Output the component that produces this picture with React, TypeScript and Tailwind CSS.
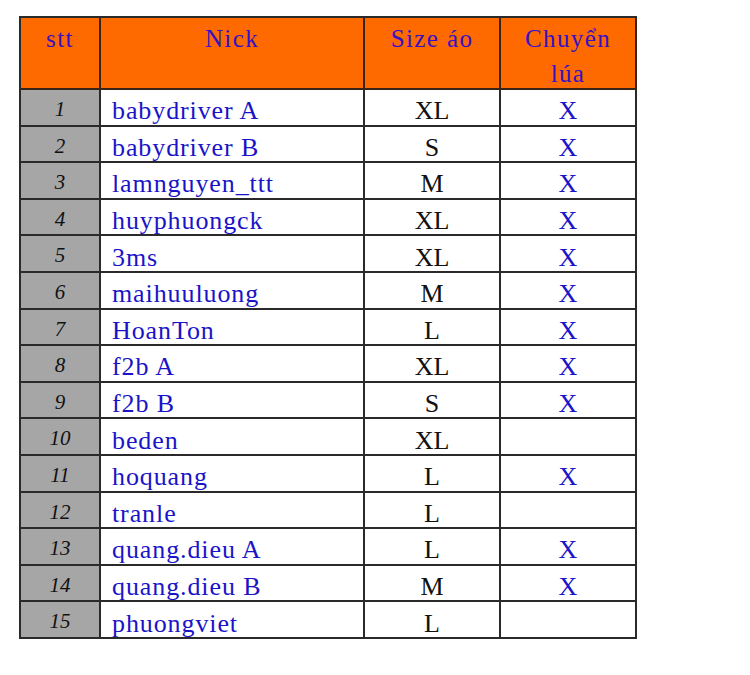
import React from "react";

const rows: [string, string, boolean][] = [
  ["babydriver A", "XL", true],
  ["babydriver B", "S", true],
  ["lamnguyen_ttt", "M", true],
  ["huyphuongck", "XL", true],
  ["3ms", "XL", true],
  ["maihuuluong", "M", true],
  ["HoanTon", "L", true],
  ["f2b A", "XL", true],
  ["f2b B", "S", true],
  ["beden", "XL", false],
  ["hoquang", "L", true],
  ["tranle", "L", false],
  ["quang.dieu A", "L", true],
  ["quang.dieu B", "M", true],
  ["phuongviet", "L", false],
];

const headCell =
  "h-[72px] bg-[#ff6a00] border-r-2 border-b-2 border-[#3a2418] flex flex-col items-center pt-[3px] text-[25px] leading-[35px] text-[#3410c8] tracking-[1.4px]";
const cell = "h-[36.6px] border-r-2 border-b-2 border-[#2a2a2a] flex items-center";

export default function App() {
  return (
    <div className="w-[750px] h-[675px] bg-white pt-[16px] pl-[19px] [font-family:'Liberation_Serif','Times_New_Roman',serif]">
      <div className="w-[618px] grid grid-cols-[80px_264px_136px_136px] border-l-2 border-t-2 border-[#2a2a2a]">
        <div className={headCell}>stt</div>
        <div className={headCell}>Nick</div>
        <div className={headCell}>Size áo</div>
        <div className={headCell}>
          <span>Chuyển</span>
          <span>lúa</span>
        </div>
        {rows.map(([nick, size, x], i) => (
          <React.Fragment key={i}>
            <div className={`${cell} justify-center bg-[#a6a6a6] italic text-[21px] text-[#111] pt-[5px]`}>
              {i + 1}
            </div>
            <div className={`${cell} pl-[11px] pt-[7px] text-[26px] text-[#1a14c8] tracking-[0.9px] whitespace-nowrap`}>
              {nick}
            </div>
            <div className={`${cell} justify-center pt-[7px] text-[26px] text-[#111]`}>{size}</div>
            <div className={`${cell} justify-center pt-[7px] text-[26px] text-[#1a14c8]`}>
              {x ? "X" : ""}
            </div>
          </React.Fragment>
        ))}
      </div>
    </div>
  );
}
